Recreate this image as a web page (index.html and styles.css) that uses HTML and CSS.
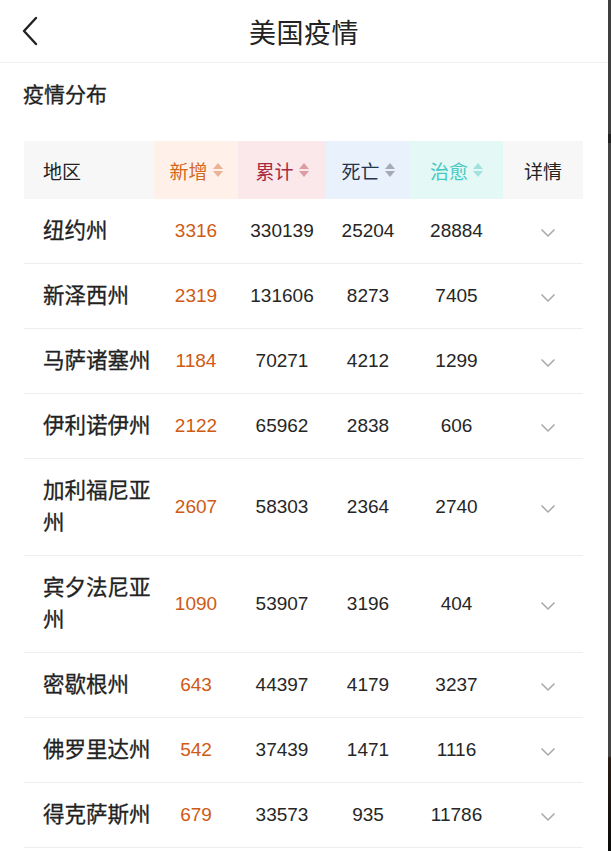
FILE: index.html
```html
<!DOCTYPE html>
<html lang="zh">
<head>
<meta charset="utf-8">
<title>美国疫情</title>
<link rel="stylesheet" href="styles.css">
</head>
<body>
<div class="screen">
  <main class="page">
    <header class="nav">
      <svg class="back" viewBox="0 0 20 30" width="20" height="30"><path d="M16 2 L4 15 L16 28" fill="none" stroke="#222" stroke-width="2.4" stroke-linecap="round" stroke-linejoin="round"/></svg>
      <h1 class="title">美国疫情</h1>
    </header>
    <h2 class="section">疫情分布</h2>
    <div class="table">
      <div class="row head">
        <div class="cell name-h">地区</div>
        <div class="cell c-new">新增<span class="sort"><i class="up"></i><i class="down"></i></span></div>
        <div class="cell c-total">累计<span class="sort"><i class="up"></i><i class="down"></i></span></div>
        <div class="cell c-dead">死亡<span class="sort"><i class="up"></i><i class="down"></i></span></div>
        <div class="cell c-cure">治愈<span class="sort"><i class="up"></i><i class="down"></i></span></div>
        <div class="cell detail-h">详情</div>
      </div>

      <div class="row"><div class="cell name">纽约州</div><div class="cell num add">3316</div><div class="cell num">330139</div><div class="cell num">25204</div><div class="cell num">28884</div><div class="cell more"><svg viewBox="0 0 16 10" width="16" height="10"><path d="M1.5 1.5 L8 8 L14.5 1.5" fill="none" stroke="#a8a8a8" stroke-width="1.5"/></svg></div></div>
      <div class="row"><div class="cell name">新泽西州</div><div class="cell num add">2319</div><div class="cell num">131606</div><div class="cell num">8273</div><div class="cell num">7405</div><div class="cell more"><svg viewBox="0 0 16 10" width="16" height="10"><path d="M1.5 1.5 L8 8 L14.5 1.5" fill="none" stroke="#a8a8a8" stroke-width="1.5"/></svg></div></div>
      <div class="row"><div class="cell name">马萨诸塞州</div><div class="cell num add">1184</div><div class="cell num">70271</div><div class="cell num">4212</div><div class="cell num">1299</div><div class="cell more"><svg viewBox="0 0 16 10" width="16" height="10"><path d="M1.5 1.5 L8 8 L14.5 1.5" fill="none" stroke="#a8a8a8" stroke-width="1.5"/></svg></div></div>
      <div class="row"><div class="cell name">伊利诺伊州</div><div class="cell num add">2122</div><div class="cell num">65962</div><div class="cell num">2838</div><div class="cell num">606</div><div class="cell more"><svg viewBox="0 0 16 10" width="16" height="10"><path d="M1.5 1.5 L8 8 L14.5 1.5" fill="none" stroke="#a8a8a8" stroke-width="1.5"/></svg></div></div>
      <div class="row"><div class="cell name">加利福尼亚州</div><div class="cell num add">2607</div><div class="cell num">58303</div><div class="cell num">2364</div><div class="cell num">2740</div><div class="cell more"><svg viewBox="0 0 16 10" width="16" height="10"><path d="M1.5 1.5 L8 8 L14.5 1.5" fill="none" stroke="#a8a8a8" stroke-width="1.5"/></svg></div></div>
      <div class="row"><div class="cell name">宾夕法尼亚州</div><div class="cell num add">1090</div><div class="cell num">53907</div><div class="cell num">3196</div><div class="cell num">404</div><div class="cell more"><svg viewBox="0 0 16 10" width="16" height="10"><path d="M1.5 1.5 L8 8 L14.5 1.5" fill="none" stroke="#a8a8a8" stroke-width="1.5"/></svg></div></div>
      <div class="row"><div class="cell name">密歇根州</div><div class="cell num add">643</div><div class="cell num">44397</div><div class="cell num">4179</div><div class="cell num">3237</div><div class="cell more"><svg viewBox="0 0 16 10" width="16" height="10"><path d="M1.5 1.5 L8 8 L14.5 1.5" fill="none" stroke="#a8a8a8" stroke-width="1.5"/></svg></div></div>
      <div class="row"><div class="cell name">佛罗里达州</div><div class="cell num add">542</div><div class="cell num">37439</div><div class="cell num">1471</div><div class="cell num">1116</div><div class="cell more"><svg viewBox="0 0 16 10" width="16" height="10"><path d="M1.5 1.5 L8 8 L14.5 1.5" fill="none" stroke="#a8a8a8" stroke-width="1.5"/></svg></div></div>
      <div class="row"><div class="cell name">得克萨斯州</div><div class="cell num add">679</div><div class="cell num">33573</div><div class="cell num">935</div><div class="cell num">11786</div><div class="cell more"><svg viewBox="0 0 16 10" width="16" height="10"><path d="M1.5 1.5 L8 8 L14.5 1.5" fill="none" stroke="#a8a8a8" stroke-width="1.5"/></svg></div></div>
    </div>
  </main>
  <div class="edge"></div>
</div>
</body>
</html>
```

FILE: styles.css
```css
html, body {
  margin: 0;
  padding: 0;
  background: #fff;
}
body {
  font-family: "Noto Sans CJK SC", "Liberation Sans", sans-serif;
  color: #222;
}
.screen {
  display: flex;
  width: 611px;
  height: 851px;
  overflow: hidden;
}
.page {
  width: 608px;
  flex: none;
}
.edge {
  width: 3px;
  flex: none;
  background: linear-gradient(#3f3f3f 0, #3f3f3f 134px, #222 134px, #222 143px, #444 143px, #444 756px, #2a1e16 758px, #0a0a0a 851px);
}
.nav {
  height: 62px;
  display: flex;
  align-items: center;
  justify-content: center;
  position: relative;
  border-bottom: 1px solid #f3f3f3;
}
.back {
  position: absolute;
  left: 20px;
  top: 16px;
}
.title {
  margin: 0;
  font-size: 27px;
  font-weight: 400;
  color: #222;
  letter-spacing: 0.5px;
}
.section {
  margin: 0;
  padding: 15px 0 0 23px;
  height: 60px;
  box-sizing: border-box;
  font-size: 21px;
  font-weight: 400;
  -webkit-text-stroke: 0.3px #222;
  color: #222;
}
.table {
  margin: 18px 0 0 24px;
  width: 559px;
}
.row {
  display: grid;
  grid-template-columns: 130px 84px 88px 84px 93px 80px;
  border-bottom: 1px solid #eeeeee;
  min-height: 64px;
}
.row.head {
  min-height: 58px;
  border-bottom: none;
}
.cell {
  display: flex;
  align-items: center;
  justify-content: center;
}
.head .cell {
  font-size: 19px;
  font-weight: 400;
}
.name-h {
  justify-content: flex-start;
  padding-left: 19px;
  background: #f7f7f7;
  color: #222;
}
.detail-h {
  background: #f7f7f7;
  color: #222;
}
.c-new { background: #fff1ea; color: #d2691e; }
.c-total { background: #fbe8ea; color: #a92a3e; }
.c-dead { background: #e9f1fc; color: #24354b; }
.c-cure { background: #e4f8f6; color: #45c9c1; }
.sort {
  display: inline-flex;
  flex-direction: column;
  gap: 2px;
  margin-left: 5px;
}
.sort i {
  display: block;
  width: 0;
  height: 0;
  border-left: 5px solid transparent;
  border-right: 5px solid transparent;
}
.sort .up { border-bottom: 6px solid currentColor; }
.sort .down { border-top: 6px solid currentColor; }
.c-new .sort { color: #ebb393; }
.c-total .sort { color: #dc9ca3; }
.c-dead .sort { color: #a4abb6; }
.c-cure .sort { color: #a2e2de; }
.name {
  justify-content: flex-start;
  padding: 14px 0 18px 19px;
  font-size: 21.5px;
  font-weight: 400;
  -webkit-text-stroke: 0.3px #222;
  line-height: 32px;
  color: #222;
}
.num {
  font-family: "Liberation Sans", Arial, sans-serif;
  font-size: 19px;
  color: #262626;
}
.num.add { color: #cf5a14; }
.more {
  padding-left: 10px;
  padding-top: 4px;
}
```
